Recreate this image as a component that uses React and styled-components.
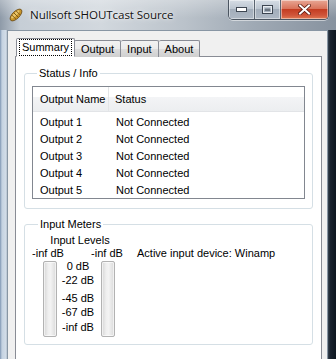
import React from 'react'
import styled, { createGlobalStyle } from 'styled-components'

const Global = createGlobalStyle`
html, body {
  margin: 0;
  padding: 0;
  width: 336px;
  height: 359px;
  overflow: hidden;
  background: #1e2a36;
}
`

const outputs = ['Output 1', 'Output 2', 'Output 3', 'Output 4', 'Output 5']
const tabs = ['Summary', 'Output', 'Input', 'About']
const scale = [
  { text: '0 dB', gap: 0 },
  { text: '-22 dB', gap: 1 },
  { text: '-45 dB', gap: 5 },
  { text: '-67 dB', gap: 1 },
  { text: '-inf dB', gap: 2 },
]

const Window = styled.div`
width: 336px;
height: 359px;
display: flex;
flex-direction: column;
background: linear-gradient(90deg, #7f96b3 0, #c4d2e1 2px, #d3dde8 6px, #aab8c7 7px, #9aa6b4 50%, #4a5664 327px, #1a2430 330px, #0d1620 336px);
font-family: "Liberation Sans", Arial, sans-serif;
font-size: 11px;
color: #000;
`

const TitleBar = styled.div`
height: 30px;
flex: none;
display: flex;
align-items: flex-start;
padding-left: 8px;
padding-right: 7px;
background:
  linear-gradient(180deg, rgba(255,255,255,0.3) 0, rgba(255,255,255,0) 60%),
  linear-gradient(90deg, #8e9aa8 0, #c6ced6 6%, #d2d8de 30%, #bac2ca 55%, #a0aab5 75%, #87929f 100%);
`

const AppIcon = styled.svg`
width: 16px;
height: 16px;
margin-top: 7px;
flex: none;
`

const Title = styled.div`
font-family: "Open Sans", "Noto Sans", sans-serif;
font-size: 11.6px;
line-height: 16px;
margin-top: 7px;
margin-left: 6px;
color: #111;
text-shadow: 0 0 6px rgba(255,255,255,0.9), 0 0 2px rgba(255,255,255,0.9);
flex: 1;
letter-spacing: -0.1px;
`

const Captions = styled.div`
display: flex;
border: 1px solid #4b5561;
border-top: none;
border-radius: 0 0 5px 5px;
overflow: hidden;
box-shadow: 0 1px 0 rgba(255,255,255,0.5);
`

const CapButton = styled.div`
width: ${({ wide }) => (wide ? 47 : 25)}px;
height: 19px;
display: flex;
align-items: center;
justify-content: center;
border-left: ${({ first }) => (first ? 'none' : '1px solid #5a6470')};
box-shadow: inset 0 0 0 1px rgba(255,255,255,0.45);
background: ${({ close }) =>
  close
    ? 'linear-gradient(180deg, #e8a795 0, #d9745c 45%, #c43d22 50%, #d0553a 80%, #e07a52 100%)'
    : 'linear-gradient(180deg, #d6dde5 0, #bcc6d1 45%, #a3aebb 50%, #aeb8c4 100%)'};
`

const Client = styled.div`
flex: 1;
display: flex;
flex-direction: column;
margin: 0 8px 0 7px;
border: 1px solid #8896a4;
border-bottom: none;
background: #f0f0f0;
padding: 7px 5px 0 7px;
min-height: 0;
`

const TabRow = styled.div`
display: flex;
align-items: flex-end;
height: 19px;
position: relative;
z-index: 1;
`

const Tab = styled.div`
height: ${({ active }) => (active ? 19 : 17)}px;
padding: 0 ${({ active }) => (active ? 3 : 6)}px;
margin: 0 ${({ active }) => (active ? '-1px' : '0')} 0 ${({ active }) => (active ? '1px' : '0')};
box-sizing: border-box;
border: 1px solid #898c95;
border-bottom: ${({ active }) => (active ? '1px solid #fff' : 'none')};
border-left: ${({ after }) => (after ? 'none' : '1px solid #898c95')};
border-radius: 2px 2px 0 0;
background: ${({ active }) => (active ? '#fff' : 'linear-gradient(180deg, #f2f2f2 0, #ebebeb 50%, #dddddd 51%, #cfcfcf 100%)')};
display: flex;
align-items: center;
line-height: 13px;
position: relative;
z-index: ${({ active }) => (active ? 2 : 1)};
`

const Focus = styled.span`
outline: 1px dotted #000;
outline-offset: 0;
padding: 1px 2px;
`

const Panel = styled.div`
flex: 1;
margin-top: -1px;
border: 1px solid #898c95;
border-bottom: none;
background: #fff;
padding: 10px 8px 0 8px;
display: flex;
flex-direction: column;
gap: 9px;
`

const Group = styled.fieldset`
margin: 0;
border: 1px solid #d5dfe5;
border-radius: 3px;
box-shadow: inset 1px 1px 0 #fff, 1px 1px 0 #fff;
padding: ${({ pad }) => pad};
min-width: 0;
`

const Legend = styled.legend`
padding: 0 2px;
margin-left: 5px;
line-height: 13px;
color: #000;
`

const List = styled.div`
border: 1px solid #828790;
height: 113px;
box-sizing: border-box;
background: #fff;
overflow: hidden;
`

const HeaderRow = styled.div`
display: grid;
grid-template-columns: 76px 1fr;
height: 24px;
background: linear-gradient(180deg, #ffffff 0, #ffffff 40%, #f3f4f6 41%, #eceef0 100%);
border-bottom: 1px solid #e2e4e7;
`

const HeaderCell = styled.div`
display: flex;
align-items: center;
padding-left: ${({ indent }) => indent}px;
border-right: ${({ sep }) => (sep ? '1px solid #e3e5e7' : 'none')};
`

const Rows = styled.div`
padding-top: 2px;
`

const Row = styled.div`
display: grid;
grid-template-columns: 76px 1fr;
height: 17px;
align-items: center;
`

const Cell = styled.div`
padding-left: ${({ indent }) => indent}px;
line-height: 13px;
`

const MeterArea = styled.div`
display: flex;
align-items: flex-start;
`

const MeterBlock = styled.div`
display: flex;
flex-direction: column;
width: 90px;
`

const BlockTitle = styled.div`
text-align: center;
line-height: 13px;
padding-left: 4px;
`

const MeterRow = styled.div`
display: flex;
`

const Channel = styled.div`
width: 30px;
display: flex;
flex-direction: column;
align-items: center;
`

const ChannelLabel = styled.div`
line-height: 13px;
white-space: nowrap;
margin-left: ${({ shift }) => shift}px;
`

const Bar = styled.div`
width: 14px;
height: 76px;
box-sizing: border-box;
margin-top: 1px;
margin-left: ${({ shift }) => shift}px;
border: 1px solid #b2b2b2;
border-radius: 2px;
background: linear-gradient(90deg, #d6d6d6 0, #efefef 35%, #f3f3f3 55%, #dadada 100%);
box-shadow: inset 0 0 0 1px rgba(255,255,255,0.6);
`

const Scale = styled.div`
width: 30px;
padding-top: 13px;
display: flex;
flex-direction: column;
align-items: center;
`

const ScaleLabel = styled.div`
line-height: 13px;
white-space: nowrap;
margin-top: ${({ gap }) => gap}px;
`

const Device = styled.div`
margin-top: 13px;
margin-left: 14px;
line-height: 13px;
`

function ShoutIcon() {
  return (
    <AppIcon viewBox="0 0 16 16">
      <g transform="rotate(-45 8 8)">
        <ellipse cx="8" cy="8" rx="7.5" ry="3.6" fill="#c8952a" stroke="#6b4a12" strokeWidth="0.8" />
        <ellipse cx="8" cy="7" rx="5.5" ry="1.6" fill="#f3d27a" opacity="0.8" />
        <path d="M5 5 L5 11 M8 4.5 L8 11.5 M11 5 L11 11" stroke="#7a5414" strokeWidth="0.9" />
      </g>
    </AppIcon>
  )
}

function App() {
  return (
    <Window>
      <Global />
      <TitleBar>
        <ShoutIcon />
        <Title>Nullsoft SHOUTcast Source</Title>
        <Captions>
          <CapButton first>
            <svg width="11" height="5" viewBox="0 0 11 5">
              <rect x="0.5" y="0.5" width="10" height="4" fill="#fff" stroke="#3d4652" />
            </svg>
          </CapButton>
          <CapButton>
            <svg width="11" height="9" viewBox="0 0 11 9">
              <rect x="0.5" y="0.5" width="10" height="8" fill="none" stroke="#3d4652" />
              <rect x="1.5" y="1.5" width="8" height="6" fill="none" stroke="#e8ecf0" strokeWidth="1" />
              <rect x="3" y="3.5" width="5" height="2.5" fill="#6b7580" />
            </svg>
          </CapButton>
          <CapButton wide close>
            <svg width="13" height="11" viewBox="0 0 13 11">
              <path d="M2 1.5 L11 9.5 M11 1.5 L2 9.5" stroke="#5a1a10" strokeWidth="3.6" strokeLinecap="square" />
              <path d="M2 1.5 L11 9.5 M11 1.5 L2 9.5" stroke="#fff" strokeWidth="2" strokeLinecap="square" />
            </svg>
          </CapButton>
        </Captions>
      </TitleBar>
      <Client>
        <TabRow>
          {tabs.map((t, i) => (
            <Tab key={t} active={i === 0} after={i > 1}>
              {i === 0 ? <Focus>{t}</Focus> : t}
            </Tab>
          ))}
        </TabRow>
        <Panel>
          <Group pad="6px 7px 9px 7px">
            <Legend>Status / Info</Legend>
            <List>
              <HeaderRow>
                <HeaderCell indent={7} sep>Output Name</HeaderCell>
                <HeaderCell indent={6}>Status</HeaderCell>
              </HeaderRow>
              <Rows>
                {outputs.map((o) => (
                  <Row key={o}>
                    <Cell indent={7}>{o}</Cell>
                    <Cell indent={7}>Not Connected</Cell>
                  </Row>
                ))}
              </Rows>
            </List>
          </Group>
          <Group pad="3px 8px 7px 8px">
            <Legend>Input Meters</Legend>
            <MeterArea>
              <MeterBlock>
                <BlockTitle>Input Levels</BlockTitle>
                <MeterRow>
                  <Channel>
                    <ChannelLabel shift={0}>-inf dB</ChannelLabel>
                    <Bar shift={3} />
                  </Channel>
                  <Scale>
                    {scale.map((s) => (
                      <ScaleLabel key={s.text} gap={s.gap}>{s.text}</ScaleLabel>
                    ))}
                  </Scale>
                  <Channel>
                    <ChannelLabel shift={-2}>-inf dB</ChannelLabel>
                    <Bar shift={0} />
                  </Channel>
                </MeterRow>
              </MeterBlock>
              <Device>Active input device: Winamp</Device>
            </MeterArea>
          </Group>
        </Panel>
      </Client>
    </Window>
  )
}

export default App
